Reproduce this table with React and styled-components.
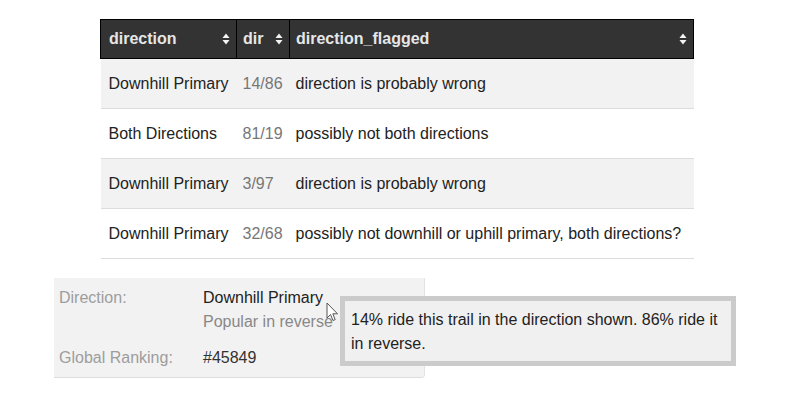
import React from 'react';
import styled, { createGlobalStyle } from 'styled-components';

const Global = createGlobalStyle`
  body {
    margin: 0;
    background: #fff;
    font-family: "Liberation Sans", Arial, sans-serif;
    font-size: 16px;
    color: #222;
  }
`;

const Page = styled.div`
  width: 800px;
  height: 400px;
  padding-top: 19px;
  box-sizing: border-box;
`;

const Table = styled.table`
  margin-left: 100px;
  width: 594px;
  border-collapse: collapse;
  table-layout: fixed;
`;

const Th = styled.th`
  background: #333;
  color: #e6e6e6;
  font-weight: bold;
  text-align: left;
  height: 38px;
  padding: 0 6px 0 6px;
  border: 1px solid #000;
  white-space: nowrap;
  &:first-child { padding-left: 8px; }
`;

const ThInner = styled.div`
  display: flex;
  align-items: center;
  justify-content: space-between;
`;

const Row = styled.tr`
  background: ${(p) => (p.$odd ? '#f2f2f2' : '#fff')};
  border-bottom: 1px solid #dcdcdc;
`;

const Td = styled.td`
  height: 49px;
  padding: 0 6px 0 6px;
  white-space: nowrap;
  color: ${(p) => (p.$muted ? '#777' : '#222')};
  &:first-child { padding-left: 8px; }
`;

const Panel = styled.div`
  position: relative;
  margin: 19px 0 0 54px;
  width: 371px;
  background: #f2f2f2;
  border-bottom: 1px solid #ddd;
  border-right: 1px solid #e2e2e2;
  border-bottom-right-radius: 4px;
  padding: 8px 0 7px 5px;
  box-sizing: border-box;
  line-height: 24px;
`;

const Field = styled.div`
  display: grid;
  grid-template-columns: 144px 1fr;
  & + & { margin-top: 12px; }
`;

const Label = styled.div`
  color: #9d9d9d;
`;

const Value = styled.div`
  color: ${(p) => p.$tone || '#222'};
  white-space: nowrap;
`;

const Tooltip = styled.div`
  position: absolute;
  left: 286px;
  top: 18px;
  width: 396px;
  height: 70px;
  box-sizing: border-box;
  border: 5px solid #cbcbcb;
  background: #f0f0f0;
  padding: 7px 6px 5px 6px;
  line-height: 24px;
  color: #222;
  white-space: nowrap;
`;

const Cursor = styled.svg`
  position: absolute;
  left: 272px;
  top: 24px;
`;

const SortIcon = () => (
  <svg width="8" height="12" viewBox="0 0 8 12">
    <path d="M4 0.5 L7.5 5 L0.5 5 Z" fill="#f4f4f4" />
    <path d="M4 11.5 L7.5 7 L0.5 7 Z" fill="#f4f4f4" />
  </svg>
);

const rows = [
  ['Downhill Primary', '14/86', 'direction is probably wrong'],
  ['Both Directions', '81/19', 'possibly not both directions'],
  ['Downhill Primary', '3/97', 'direction is probably wrong'],
  ['Downhill Primary', '32/68', 'possibly not downhill or uphill primary, both directions?'],
];

export default function App() {
  return (
    <Page>
      <Global />
      <Table>
        <colgroup>
          <col style={{ width: 136 }} />
          <col style={{ width: 53 }} />
          <col />
        </colgroup>
        <thead>
          <tr>
            {['direction', 'dir', 'direction_flagged'].map((h) => (
              <Th key={h}>
                <ThInner>
                  <span>{h}</span>
                  <SortIcon />
                </ThInner>
              </Th>
            ))}
          </tr>
        </thead>
        <tbody>
          {rows.map((r, i) => (
            <Row key={i} $odd={i % 2 === 0}>
              <Td>{r[0]}</Td>
              <Td $muted>{r[1]}</Td>
              <Td>{r[2]}</Td>
            </Row>
          ))}
        </tbody>
      </Table>
      <Panel>
        <Field>
          <Label>Direction:</Label>
          <div>
            <Value>Downhill Primary</Value>
            <Value $tone="#888">Popular in reverse</Value>
          </div>
        </Field>
        <Field>
          <Label>Global Ranking:</Label>
          <Value $tone="#333">#45849</Value>
        </Field>
        <Cursor width="13" height="20" viewBox="0 0 13 20">
          <path
            d="M1 1 L1 16 L4.5 12.5 L7 18.5 L9.2 17.6 L6.8 11.8 L11.5 11.8 Z"
            fill="#fff"
            stroke="#555"
            strokeWidth="1"
            strokeLinejoin="round"
          />
        </Cursor>
        <Tooltip>
          14% ride this trail in the direction shown. 86% ride it
          <br />
          in reverse.
        </Tooltip>
      </Panel>
    </Page>
  );
}
